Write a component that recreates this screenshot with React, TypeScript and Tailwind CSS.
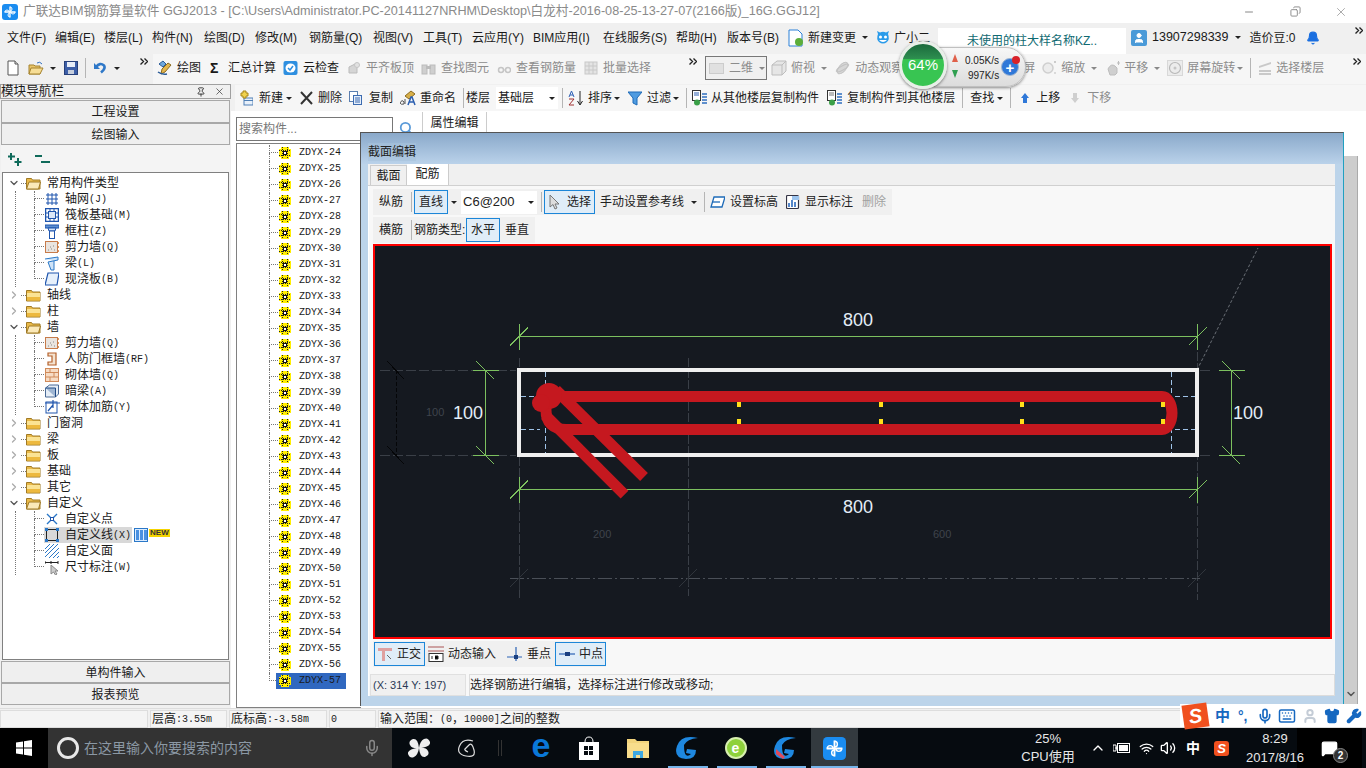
import React from 'react';
import { Bell, ChevronDown, ChevronRight, ChevronUp, Copy, Keyboard, MessageSquare, Mic, Minus, Pin, Search, Shirt, User, Volume2, Wifi, Wrench, X } from 'lucide-react';

const Caret = ({ cls = '' }: { cls?: string }) => (
  <span className={'shrink-0 w-0 h-0 border-l-[3px] border-r-[3px] border-t-[3px] border-l-transparent border-r-transparent border-t-[#222] ' + cls} />
);
const Sep = ({ cls = '' }: { cls?: string }) => <span className={'shrink-0 w-px h-[20px] bg-[#b5b5b5] ' + cls} />;
const More = ({ cls = '' }: { cls?: string }) => (
  <svg width="8" height="7" viewBox="0 0 8 7" className={'shrink-0 self-start mt-[4px] ' + cls}>
    <path d="M0.500 0.500l3 3-3 3M4.500 0.500l3 3-3 3" fill="none" stroke="#222" strokeWidth="1.400" />
  </svg>
);

const Tool = ({ cls = '', icon, text, grey }: { cls?: string; icon?: React.ReactNode; text: string; grey?: boolean }) => (
  <div className={'flex items-center shrink-0 whitespace-nowrap ' + cls + (grey ? ' text-[#8c8c8c]' : '')}>
    {icon}
    <span>{text}</span>
  </div>
);

const Svg = ({ w = 16, h = 16, children }: { w?: number; h?: number; children: React.ReactNode }) => (
  <svg width={w} height={h} viewBox={`0 0 ${w} ${h}`} className="shrink-0">{children}</svg>
);

/* toolbar icons */
const DocIcon = () => <Svg w={12}><path d="M1 1h7l3 3v11H1z" fill="#fff" stroke="#555" /><path d="M8 1v3h3" fill="#ddd" stroke="#555" /></Svg>;
const OpenIcon = () => <Svg><path d="M1 5h5l1 1h5v8H1z" fill="#e8c46a" stroke="#a5832e" /><path d="M3 8h12l-3 6H1z" fill="#f6dd95" stroke="#a5832e" /><path d="M9 3q3-2 5 1" fill="none" stroke="#2f6fc0" /></Svg>;
const SaveIcon = () => <Svg w={14}><rect x="0.500" y="1.500" width="13" height="13" fill="#3d5fa8" stroke="#27407a" /><rect x="3" y="2" width="8" height="5" fill="#e8eef8" /><rect x="4" y="10" width="6" height="4" fill="#c7cfdd" /></Svg>;
const UndoIcon = () => <Svg w={12}><path d="M2 7q4-5 8-1.500q2 3-3 7" fill="none" stroke="#2f78c8" strokeWidth="2.600" /><path d="M0 3v6h6z" fill="#2f78c8" /></Svg>;
const DrawIcon = () => <Svg><path d="M2 4l4-3 3 3-3 3z" fill="#6fa8dc" stroke="#2a5a96" /><path d="M5 9l6-6 3 2-6 7-4 2z" fill="#e4b64e" stroke="#8a6a20" /><path d="M1 12q4 3 9 2" fill="none" stroke="#2a5a96" strokeWidth="1.500" /></Svg>;
const CloudIcon = () => <Svg w={15}><rect x="0.500" y="1" width="14" height="14" rx="2" fill="#2e8fe0" /><ellipse cx="7.500" cy="8" rx="5" ry="4.500" fill="#fff" /><path d="M5 8l2 2 3-4" fill="none" stroke="#2e8fe0" strokeWidth="1.500" /></Svg>;
const GreyBox = ({ w = 14 }: { w?: number }) => <Svg w={w}><path d={`M2 7l${w - 6}-4v10H2z`} fill="#d5d5d5" stroke="#bbb" /><circle cx={w - 4} cy="5" r="2.500" fill="#e2e2e2" stroke="#c5c5c5" /></Svg>;
const GreyBino = () => <Svg w={15}><rect x="1" y="5" width="5" height="9" fill="#cfcfcf" stroke="#bbb" /><rect x="9" y="5" width="5" height="9" fill="#cfcfcf" stroke="#bbb" /><rect x="5" y="6" width="5" height="3" fill="#bbb" /></Svg>;
const GreyGlass = () => <Svg w={14}><circle cx="4" cy="10" r="2.500" fill="none" stroke="#c5c5c5" strokeWidth="1.500" /><circle cx="11" cy="10" r="2.500" fill="none" stroke="#c5c5c5" strokeWidth="1.500" /><path d="M6 10h3" stroke="#c5c5c5" /></Svg>;
const GreyBatch = () => <Svg w={14}><rect x="1" y="2" width="12" height="12" fill="#e4e4e4" stroke="#c8c8c8" /><path d="M1 6h12M1 10h12M5 2v12M9 2v12" stroke="#c8c8c8" /></Svg>;
const GreyCube = () => <Svg><path d="M1 5l5-4h9v10l-4 4H1z" fill="#e6e6e6" stroke="#bdbdbd" /><path d="M1 5h10v10M11 5l4-4" fill="none" stroke="#bdbdbd" /></Svg>;
const GreyOrbit = () => <Svg w={15}><ellipse cx="7.500" cy="8" rx="3.500" ry="7" transform="rotate(40 7.500 8)" fill="#d6d6d6" stroke="#c2c2c2" /><ellipse cx="7.500" cy="8" rx="7" ry="2" transform="rotate(-30 7.500 8)" fill="none" stroke="#c2c2c2" /></Svg>;
const GreyZoom = () => <Svg w={15}><circle cx="6" cy="8" r="5" fill="#ececec" stroke="#cfcfcf" strokeWidth="1.500" /><path d="M12 2h2M13 1v2M12 13h2" stroke="#bdbdbd" /></Svg>;
const GreyPan = () => <Svg w={14}><path d="M2 9q3-6 7-3l2 2v5l-2 2H4z" fill="#cfcfcf" stroke="#bdbdbd" /><path d="M11 3h3M12.500 1v4" stroke="#bdbdbd" /></Svg>;
const GreyRotate = () => <Svg><rect x="0.500" y="0.500" width="15" height="15" fill="#ececec" stroke="#d8d8d8" /><circle cx="8" cy="8" r="5.500" fill="none" stroke="#b8b8b8" strokeWidth="1.200" /><circle cx="8" cy="8" r="1.500" fill="#c5c5c5" /></Svg>;
const GreyFloors = () => <Svg w={14}><path d="M1 6l12-4v2L1 8zM1 10h12v2H1zM1 13h12v2H1z" fill="#c9c9c9" /></Svg>;
const NewIcon = () => <Svg w={13}><rect x="4" y="8" width="9" height="7" fill="#e8f0fa" stroke="#4f7fb5" /><path d="M4 10.500h9" stroke="#4f7fb5" /><path d="M3 1h3v2h2v3H6v2H3V6H1V3h2z" fill="#f0d24e" stroke="#a8861a" /></Svg>;
const CrossIcon = () => <Svg w={13}><path d="M1 2l11 12M12 2L1 14" stroke="#333" strokeWidth="2" /></Svg>;
const CopyIcon = () => <Svg w={13}><rect x="0.500" y="1.500" width="8" height="10" fill="#fff" stroke="#5a7fb0" /><rect x="4.500" y="5.500" width="8" height="9" fill="#e5eefa" stroke="#3c6bb0" /><path d="M6 8h5M6 10h5M6 12h5" stroke="#3c6bb0" /></Svg>;
const RenameIcon = () => <Svg><path d="M5 6l6-5 4 3-6 5z" fill="#d8b04a" stroke="#8a6a20" /><path d="M0 13q2-4 4-1v2q-3 1-4-1zM5 9v5" fill="none" stroke="#555" /><path d="M8 15l3-8h1l3 8M9.500 12h4" fill="none" stroke="#2c5fb0" strokeWidth="1.500" /></Svg>;
const SortIcon = () => <Svg><path d="M1 7l2.500-6L6 7M2 5h3" fill="none" stroke="#2b5fb5" /><path d="M1 9h5l-5 6h5" fill="none" stroke="#a03030" /><path d="M12 1v13M9.500 11l2.500 4 2.500-4" fill="none" stroke="#222" /></Svg>;
const FunnelIcon = () => <Svg w={14}><path d="M0 2h14L9 8v7l-4-2V8z" fill="#4f9be0" stroke="#1e6bb8" /></Svg>;
const TransferIcon = ({ down }: { down?: boolean }) => <Svg><rect x="0.500" y="0.500" width="8" height="10" fill="#fff" stroke="#333" /><path d="M2 3h5M2 5h5" stroke={down ? '#2c5fb0' : '#777'} /><path d="M10 4h5M10 7h5M10 10h5M10 13h5" stroke="#2f6fc0" strokeWidth="1.500" /><circle cx="5" cy="12.500" r="3" fill="#3aa048" /></Svg>;
const UpIcon = ({ grey }: { grey?: boolean }) => <Svg w={10}><path d="M5 3l4 5H7v5H3V8H1z" fill={grey ? '#cfcfcf' : '#2f78d8'} /></Svg>;
const DownIcon = () => <Svg w={10}><path d="M5 13l4-5H7V3H3v5H1z" fill="#cfcfcf" /></Svg>;
const FaceIcon = () => (
  <Svg w={16} h={16}>
    <path d="M3 4L2 1l3 1.500q3-1.500 6 0L14 1l-1 3q2 5-1 8-4 3-8 0-3-3-1-8z" fill="#2a9bea" />
    <circle cx="5.500" cy="7" r="1.500" fill="#fff" /><circle cx="10.500" cy="7" r="1.500" fill="#fff" />
    <path d="M4 10q4 4 8 0z" fill="#fff" />
  </Svg>
);

/* tree icons */
const Folder = ({ open }: { open?: boolean }) => (
  <Svg w={15} h={14}>
    <path d="M0.500 2.500h5l1 1.500h7.500v9H0.500z" fill="#e9b949" stroke="#a07a25" />
    {open ? <path d="M3 6h11.500l-2 7H0.500z" fill="#fbe9b8" stroke="#a07a25" /> : <><rect x="1" y="5" width="13" height="4" fill="#fbe394" /><rect x="1" y="9" width="13" height="3.500" fill="#edb93f" /></>}
  </Svg>
);
const CIcon = ({ k }: { k: string }) => {
  const b = '#1f55ad';
  if (k === 'grid') return <Svg w={14} h={14}><path d="M1 3h12M1 7h12M1 11h12M3 1v12M7 1v12M11 1v12" stroke={b} /></Svg>;
  if (k === 'raft') return <Svg w={14} h={14}><rect x="0.500" y="0.500" width="13" height="13" fill="none" stroke={b} strokeWidth="1.500" /><rect x="3.500" y="3.500" width="7" height="7" fill="#dce8f8" stroke={b} /><path d="M0 5h3M0 9h3M11 5h3M11 9h3M5 0v3M9 0v3M5 11v3M9 11v3" stroke={b} /></Svg>;
  if (k === 'col') return <Svg w={14} h={15}><path d="M0 1h14v3H0z" fill="#5d8fd0" stroke={b} /><path d="M3 4h8l-1 3H4z" fill="#cfe0f5" stroke={b} /><rect x="4.500" y="7" width="5" height="7.500" fill="#fff" stroke={b} /></Svg>;
  if (k === 'shear') return <Svg w={14} h={14}><rect x="0.500" y="1.500" width="12" height="11" fill="#e9e4df" stroke="#c77b4a" /><path d="M3 10h1M6 9h1M9 10h1M5 7h1M8 6h1" stroke="#888" /><path d="M13 3h1M13 7h1M13 11h1" stroke="#d0702a" strokeWidth="1.500" /></Svg>;
  if (k === 'beam') return <Svg w={14} h={15}><path d="M0 3l13-2v3L3 6l3 8h3V5" fill="#cfe3f7" stroke="#2a78c8" /></Svg>;
  if (k === 'slab') return <Svg w={14} h={14}><path d="M3 1h11l-2 12H0z" fill="#e6f0fb" stroke={b} strokeWidth="1.200" /></Svg>;
  if (k === 'door') return <Svg w={14} h={14}><path d="M3 1h8v12H3v-3h4V4H3z" fill="#f4e3d0" stroke="#b5602a" strokeWidth="1.200" /></Svg>;
  if (k === 'brick') return <Svg w={14} h={14}><rect x="0.500" y="0.500" width="13" height="13" fill="#f7dcc4" stroke="#d08a5a" /><path d="M0 4.500h14M0 9h14M5 0v4.500M9 4.500V9M5 9v5" stroke="#d08a5a" /></Svg>;
  if (k === 'hidden') return <Svg w={14} h={14}><path d="M0.500 4l4-3h9v9l-3 3H0.500z" fill="#e5edf6" stroke="#4a6a96" /><path d="M0.500 4h10v9" fill="#9fb6d3" stroke="#1f4a86" /></Svg>;
  if (k === 'rebar') return <Svg w={15} h={14}><rect x="1" y="2" width="11" height="11" fill="#fff" stroke={b} /><path d="M0 3h15M8 0v8M3 11l5-6" stroke={b} strokeWidth="1.200" /></Svg>;
  if (k === 'point') return <Svg w={14} h={14}><path d="M2 2l10 10M12 2L2 12" stroke="#2a78c8" strokeWidth="1.400" /><rect x="5.500" y="5.500" width="3" height="3" fill="#fff" stroke={b} /></Svg>;
  if (k === 'line') return <Svg w={14} h={14}><rect x="1.500" y="1.500" width="11" height="11" fill="none" stroke="#222" /><path d="M0 0h3v3H0zM11 0h3v3h-3zM0 11h3v3H0zM11 11h3v3h-3z" fill="#2a78c8" /></Svg>;
  if (k === 'face') return <Svg w={14} h={14}><path d="M0 5L5 0M0 9l9-9M0 13L13 0M4 14L14 4M8 14l6-6M12 14l2-2" stroke="#2a78c8" /></Svg>;
  return <Svg w={15} h={15}><path d="M0 1v3M0 2.500h13M13 1v3M6 1v3" stroke="#222" /><path d="M6 5v9l2.500-2 2 3 1.500-1-2-3h3z" fill="#ccc" stroke="#888" /></Svg>;
};
const Gear = () => (
  <Svg w={12} h={12}>
    <rect x="2" y="0" width="8" height="12" fill="#ffee00" />
    <rect x="0" y="2" width="12" height="8" fill="#ffee00" />
    <path d="M3.500 0v12M8.500 0v12M0 3.500h12M0 8.500h12" stroke="#222" strokeDasharray="1 1" />
    <rect x="4.500" y="4.500" width="3" height="3" fill="#fff" stroke="#111" />
  </Svg>
);

type Item = { k: string; a: string; b?: string };
const Root = ({ text, open, children }: { text: string; open?: boolean; children?: React.ReactNode }) => (
  <>
    <div className="flex items-center h-[16px]">
      {open ? <ChevronDown size={12} strokeWidth={2.500} className="ml-[5px] text-[#555] shrink-0" /> : <ChevronRight size={12} strokeWidth={2.500} className="ml-[5px] text-[#aaa] shrink-0" />}
      <span className="w-[5px] ml-[1px] border-t border-dotted border-[#777]" />
      <Folder open={open} />
      <span className="ml-[6px] text-[12px]">{text}</span>
    </div>
    {children}
  </>
);
const Kids = ({ items }: { items: Item[] }) => (
  <div className="ml-[12px] border-l border-dotted border-[#777]">
    {items.map((it, i) => (
      <div key={i} className="flex items-center h-[16px]">
        <div className="ml-[18px] w-[10px] h-[16px] shrink-0">
          <div className="h-[8px] border-l border-b border-dotted border-[#777]" />
          <div className={'h-[8px] ' + (i < items.length - 1 ? 'border-l border-dotted border-[#777]' : '')} />
        </div>
        <span className="relative z-10 w-[16px] flex justify-center shrink-0"><CIcon k={it.k} /></span>
        <span className={'flex items-center h-[16px] text-[12px] whitespace-nowrap ' + (it.k === 'line' ? 'bg-[#d8d8d8] pr-[1px] -ml-[16px] pl-[21px]' : 'ml-[5px]')}>
          {it.a}
          {it.b && <span className="font-['Liberation_Mono',monospace] text-[10px]">{it.b}</span>}
        </span>
        {it.k === 'line' && (
          <>
            <span className="ml-[2px] w-[14px] h-[14px] bg-[#dcecff] border border-[#2a78c8] flex gap-px justify-center items-center">
              <span className="w-[3px] h-[10px] bg-[#4a90e0]" /><span className="w-[3px] h-[10px] bg-[#4a90e0]" /><span className="w-[3px] h-[10px] bg-[#4a90e0]" />
            </span>
            <span className="ml-[1px] -mt-[5px] px-[1px] bg-[#f5d400] text-[8px] leading-[8px] font-bold text-[#333] font-['Liberation_Sans',sans-serif]">NEW</span>
          </>
        )}
      </div>
    ))}
  </div>
);

const common: Item[] = [
  { k: 'grid', a: '轴网', b: '(J)' }, { k: 'raft', a: '筏板基础', b: '(M)' }, { k: 'col', a: '框柱', b: '(Z)' },
  { k: 'shear', a: '剪力墙', b: '(Q)' }, { k: 'beam', a: '梁', b: '(L)' }, { k: 'slab', a: '现浇板', b: '(B)' },
];
const wall: Item[] = [
  { k: 'shear', a: '剪力墙', b: '(Q)' }, { k: 'door', a: '人防门框墙', b: '(RF)' }, { k: 'brick', a: '砌体墙', b: '(Q)' },
  { k: 'hidden', a: '暗梁', b: '(A)' }, { k: 'rebar', a: '砌体加筋', b: '(Y)' },
];
const custom: Item[] = [
  { k: 'point', a: '自定义点' }, { k: 'line', a: '自定义线', b: '(X)' }, { k: 'face', a: '自定义面' }, { k: 'dim', a: '尺寸标注', b: '(W)' },
];

const menus = [
  ['文件(F)', 'w-[48px]'], ['编辑(E)', 'w-[49px]'], ['楼层(L)', 'w-[48px]'], ['构件(N)', 'w-[52px]'], ['绘图(D)', 'w-[51px]'],
  ['修改(M)', 'w-[54px]'], ['钢筋量(Q)', 'w-[64px]'], ['视图(V)', 'w-[50px]'], ['工具(T)', 'w-[49px]'], ['云应用(Y)', 'w-[61px]'],
  ['BIM应用(I)', 'w-[70px]'], ['在线服务(S)', 'w-[73px]'], ['帮助(H)', 'w-[51px]'], ['版本号(B)', 'w-[61px]'],
];
const zdyx = Array.from({ length: 34 }, (_, i) => i + 24);

const AppLogo = ({ s = 16 }: { s?: number }) => (
  <svg width={s} height={s} viewBox="0 0 16 16" className="shrink-0">
    <rect width="16" height="16" rx="3" fill="#1a8cf0" />
    <path d="M8 2.500v11M2.500 8h11" stroke="#fff" strokeWidth="1.300" fill="none" />
    <path d="M8 3q2 0 2 2t-2 2M13 8q0 2-2 2t-2-2M8 13q-2 0-2-2t2-2M3 8q0-2 2-2t2 2" stroke="#fff" fill="none" />
  </svg>
);

const Section = () => {
  const green = '#7cc05f';
  const tickV = (x: number, y: number) => `M${x} ${y - 13}V${y + 13}M${x - 9} ${y + 9}L${x + 9} ${y - 9}`;
  const tickH = (x: number, y: number) => `M${x - 13} ${y}H${x + 13}M${x - 9} ${y - 9}L${x + 9} ${y + 9}`;
  return (
    <svg viewBox="373 244 959 395" width="959" height="395" className="block">
      <rect x="373" y="244" width="959" height="395" fill="#151920" />
      {/* dark reference lines */}
      <g stroke="#3a3f47" fill="none" shapeRendering="crispEdges">
        <path d="M380 370.500H516M380 455.500H516M1200 370.500H1211M1200 455.500H1211" strokeDasharray="10 3" />
        <path d="M519 358V600M688 358V596M1197.500 352V600" strokeDasharray="9 2" />
        <path d="M510 578H1200" stroke="#4a4f57" strokeDasharray="14 3 2 3" />
        <path d="M688 570V586M519 570V590M510 587L528 569M679 587L697 569M1188 587L1206 569" stroke="#30353c" />
      </g>
      <g stroke="#050608" fill="none" shapeRendering="crispEdges">
        <path d="M396.500 370V456" strokeDasharray="4 2" />
        <path d="M387 361L404 379M387 446L404 464" />
      </g>
      <path d="M1197 370L1258 248" stroke="#6a6f76" strokeDasharray="3 2" fill="none" />
      {/* green dimensions */}
      <g stroke={green} fill="none" shapeRendering="crispEdges">
        <path d="M519 336.500H1197M519 489.500H1197M485.500 370.500V455.500M1231.500 370.500V455.500" />
        <path d={tickV(519, 336.5)} /><path d={tickV(1197.5, 336.5)} />
        <path d={tickV(519, 489.5)} /><path d={tickV(1197.5, 489.5)} />
        <path d={tickH(485.5, 370.5)} /><path d={tickH(485.5, 455.5)} />
        <path d={tickH(1231.5, 370.5)} /><path d={tickH(1231.5, 455.5)} />
      </g>
      <rect x="519" y="370" width="678" height="85" fill="none" stroke="#efefef" strokeWidth="4" />
      {/* blue construction lines */}
      <g stroke="#9fc3e8" fill="none" strokeDasharray="5 3">
        <path d="M545.500 372V453M521 396.500H540M521 429.500H540M1171.500 372V453M1175 396.500H1195M1175 429.500H1195" />
      </g>
      {/* stirrup */}
      <g stroke="#c5181f" fill="none" strokeWidth="11">
        <path d="M552 396.500H1162A10 16.500 0 0 1 1162 429.500H566Q546 429 546 410V396" />
        <path d="M556 390L644 477" />
        <path d="M545 415L624.500 494.700" />
      </g>
      <circle cx="549" cy="396" r="13" fill="#c5181f" />
      <circle cx="541" cy="403" r="9" fill="#c5181f" />
      <g fill="#ffdf1a">
        {[739, 881, 1022, 1163].map(x => (
          <React.Fragment key={x}>
            <rect x={x - 2} y="402" width="4" height="5" />
            <rect x={x - 2} y="419" width="4" height="5" />
          </React.Fragment>
        ))}
      </g>
      <g fontFamily="Liberation Sans" fontSize="18" fill="#e3edf7">
        <text x="843" y="326">800</text>
        <text x="843" y="513">800</text>
        <text x="453" y="419">100</text>
        <text x="1233" y="419">100</text>
      </g>
      <g fontFamily="Liberation Sans" fontSize="11" fill="#3f444c">
        <text x="426" y="416">100</text>
        <text x="593" y="538">200</text>
        <text x="933" y="538">600</text>
      </g>
    </svg>
  );
};

const Dialog = () => (
  <div className="absolute left-[360px] top-[132px] w-[984px] h-[574px] flex flex-col border-l border-t border-[#555] bg-[#bcd4ea] border-r border-r-[#20a0c0]">
    <div className="h-[31px] shrink-0 bg-gradient-to-b from-[#8aa9ca] to-[#bad2ea] flex items-center pl-[7px] pt-[6px] text-[12px] text-[#222]">
      <span className="bg-[#a9c3dc]/60">截面编辑</span>
    </div>
    <div className="ml-[7px] w-[967px] h-[563px] bg-[#f4f4f4] flex flex-col mb-[10px] overflow-hidden">
      <div className="h-[22px] shrink-0 flex items-end pl-[2px] text-[12px] border-b border-[#d0d0d0] bg-[#f0f0f0]">
        <div className="w-[37px] h-[20px] flex items-center justify-center border border-b-0 border-[#ccc] bg-[#f0f0f0]">截面</div>
        <div className="w-[42px] h-[22px] flex items-center justify-center bg-white border-r border-[#ccc]">配筋</div>
      </div>
      <div className="flex-1 flex flex-col border-l border-[#fff] bg-[#f8f8f8] text-[12px] text-[#222]">
        <div className="ml-[4px] mt-[3px] w-[519px] h-[26px] shrink-0 flex items-center bg-[#f0f0f0]">
          <span className="ml-[6px]">纵筋</span>
          <Sep cls="ml-[8px]" />
          <div className="ml-[2px] w-[34px] h-[24px] flex items-center justify-center border border-[#1c86d8] bg-[#e0edf8]">直线</div>
          <Caret cls="ml-[3px]" />
          <div className="ml-[4px] w-[76px] h-[23px] bg-white flex items-center pl-[2px] justify-between pr-[3px]">
            <span className="font-['Liberation_Sans',sans-serif] text-[13px]">C6@200</span>
            <Caret />
          </div>
          <Sep cls="ml-[4px]" />
          <div className="ml-[2px] w-[51px] h-[24px] flex items-center pl-[4px] gap-[6px] border border-[#1c86d8] bg-[#e0edf8]">
            <Svg w={12}><path d="M1 1v12l3-2.500 2 4.500 2-1-2-4h4z" fill="#ddd" stroke="#777" /></Svg>
            <span>选择</span>
          </div>
          <span className="ml-[5px] whitespace-nowrap">手动设置参考线</span>
          <Caret cls="ml-[7px]" />
          <Sep cls="ml-[7px]" />
          <Tool cls="ml-[5px] gap-[5px]" icon={<Svg w={15}><path d="M4 3h11l-3 10H1z" fill="#fff" stroke="#1e6bb8" strokeWidth="1.300" /><path d="M3 8h7" stroke="#1e6bb8" strokeWidth="1.300" /></Svg>} text="设置标高" />
          <Tool cls="ml-[8px] gap-[5px]" icon={<Svg w={14}><rect x="0.500" y="1.500" width="12" height="13" rx="1" fill="#fff" stroke="#334" strokeWidth="1.200" /><path d="M3 13V9M6 13V6M9 13V8" stroke="#1e5fb8" strokeWidth="1.500" /><rect x="6" y="2" width="7" height="4" fill="#9cc4ee" /></Svg>} text="显示标注" />
          <span className="ml-[9px] text-[#a0a0a0]">删除</span>
        </div>
        <div className="ml-[4px] mt-[2px] w-[162px] h-[26px] shrink-0 flex items-center bg-[#f0f0f0]">
          <span className="ml-[6px]">横筋</span>
          <Sep cls="ml-[8px]" />
          <span className="ml-[2px] w-[52px] whitespace-nowrap">钢筋类型:</span>
          <div className="w-[34px] h-[24px] flex items-center justify-center border border-[#1c86d8] bg-[#e0edf8]">水平</div>
          <span className="ml-[5px]">垂直</span>
        </div>
        <div className="ml-[4px] mt-[1px] w-[959px] h-[395px] shrink-0 relative">
          <Section />
          <div className="absolute inset-0 border-2 border-[#ff0000] pointer-events-none" />
        </div>
        <div className="ml-[4px] mt-[2px] h-[26px] w-[233px] shrink-0 flex items-center bg-[#f0f0f0]">
          <div className="ml-[1px] w-[51px] h-[24px] flex items-center pl-[3px] gap-[4px] border border-[#1c86d8] bg-[#e0edf8]">
            <Svg w={15}><path d="M0 2h14v3H0z" fill="#dfa0a0" /><path d="M4 5h3v10H4z" fill="#dfa0a0" /><path d="M9 9l4 4" stroke="#666" /></Svg>
            <span>正交</span>
          </div>
          <Tool cls="ml-[3px] gap-[4px]" icon={<Svg><path d="M0 1h16M0 5h16" stroke="#a55" /><rect x="1" y="7.500" width="14" height="8" fill="#fff" stroke="#333" /><path d="M4 10v3M7 10h3v3H7" stroke="#222" /></Svg>} text="动态输入" />
          <Tool cls="ml-[11px] gap-[5px]" icon={<Svg w={15}><path d="M0 11h15M9 1v14" stroke="#2a62b5" strokeWidth="1.200" /><rect x="7" y="9" width="4" height="4" fill="#1b3f80" /></Svg>} text="垂点" />
          <div className="ml-[4px] w-[51px] h-[24px] flex items-center pl-[3px] gap-[4px] border border-[#1c86d8] bg-[#e0edf8] shrink-0">
            <Svg><path d="M0 8h16" stroke="#2a62b5" strokeWidth="1.200" /><rect x="6" y="6" width="5" height="4" fill="#1b3f80" /></Svg>
            <span>中点</span>
          </div>
        </div>
        <div className="mt-[7px] ml-[1px] h-[22px] shrink-0 flex gap-[3px]">
          <div className="w-[96px] flex items-center pl-[2px] bg-[#f0f0f0] border border-[#e0e0e0] text-[11px] text-[#2a3a55] font-['Liberation_Sans',sans-serif]">(X: 314 Y: 197)</div>
          <div className="flex-1 flex items-center bg-[#f6f6f6] border border-[#dcdcdc]">选择钢筋进行编辑，选择标注进行修改或移动;</div>
        </div>
      </div>
    </div>
  </div>
);

const Gauge = () => (
  <>
    <div className="absolute left-[920px] top-[47px] w-[106px] h-[40px] rounded-full bg-gradient-to-b from-[#f7f7f7] to-[#dcdcdc] border border-[#c0c0c0] shadow-[0_1px_3px_rgba(0,0,0,0.45)] font-['Liberation_Sans',sans-serif] text-[10px] text-[#222]">
      <span className="absolute left-[44px] top-[5px] whitespace-nowrap">0.05K/s</span>
      <span className="absolute left-[47px] top-[20px] whitespace-nowrap">997K/s</span>
      <span className="absolute left-[31px] top-[6px] w-0 h-0 border-l-[3px] border-r-[3px] border-b-[8px] border-l-transparent border-r-transparent border-b-[#e0604a]" />
      <span className="absolute left-[31px] top-[22px] w-0 h-0 border-l-[3px] border-r-[3px] border-t-[8px] border-l-transparent border-r-transparent border-t-[#2f9f50]" />
      <span className="absolute left-[80px] top-[10px] w-[18px] h-[18px] rounded-full bg-[#2f78d8] border border-[#9fb5d0] flex items-center justify-center text-white text-[15px] leading-none font-bold">+</span>
      <span className="absolute left-[91px] top-[8px] w-[8px] h-[8px] rounded-full bg-[#d8222a]" />
    </div>
    <div className="absolute left-[899px] top-[41px] w-[48px] h-[48px] rounded-full border-[3px] border-[#e8efe8] shadow-[0_1px_3px_rgba(0,0,0,0.5)] bg-[linear-gradient(180deg,#1a6a3c_0%,#2e8f50_36%,#38c552_37%,#38c552_100%)] overflow-hidden flex items-center justify-center text-white text-[15px] font-['Liberation_Sans',sans-serif]">
      64%
    </div>
  </>
);

const Sogou = () => (
  <div className="absolute left-[1180px] top-[704px] h-[23px] w-[186px] bg-white flex items-center text-[#1668c0]">
    <span className="w-[25px] h-[24px] ml-[3px] rotate-[-8deg] bg-[#f0501e] flex items-center justify-center text-white font-bold italic text-[20px] leading-none font-['Liberation_Sans',sans-serif]">S</span>
    <span className="ml-[7px] text-[15px] font-bold leading-none">中</span>
    <span className="ml-[8px] text-[14px] font-bold leading-none">°,</span>
    <Mic size={16} strokeWidth={2.500} className="ml-[9px]" />
    <Keyboard size={18} strokeWidth={2} className="ml-[5px]" />
    <User size={16} strokeWidth={3} className="ml-[6px] text-[#c4ccd6]" />
    <Shirt size={16} fill="#1668c0" className="ml-[6px]" />
    <Wrench size={16} fill="#1668c0" className="ml-[6px]" />
  </div>
);

const AppCell = ({ children, bar }: { children: React.ReactNode; bar?: boolean }) => (
  <div className="relative w-[49px] h-full shrink-0 flex items-center justify-center">
    {children}
    {bar && <span className="absolute bottom-0 left-[6px] w-[40px] h-[2px] bg-[#76b4ea]" />}
  </div>
);

const Taskbar = () => (
  <div className="h-[40px] shrink-0 flex items-center bg-[#060b10] text-white font-['Liberation_Sans','Noto_Sans_CJK_SC',sans-serif]">
    <div className="w-[48px] h-full shrink-0 bg-black flex items-center justify-center">
      <svg width="16" height="16" viewBox="0 0 16 16"><path d="M0 2.500l7-1v6H0zM8 1.300l8-1.300v7.500H8zM0 8.500h7v6l-7-1zM8 8.500h8V16l-8-1.300z" fill="#fff" /></svg>
    </div>
    <div className="w-[344px] h-full shrink-0 bg-[#333] flex items-center">
      <span className="ml-[9px] w-[22px] h-[22px] rounded-full border-[3px] border-[#e8e8e8]" />
      <span className="ml-[5px] text-[14px] text-[#8b98a4]">在这里输入你要搜索的内容</span>
      <Mic size={18} className="ml-auto mr-[11px] text-[#888]" />
    </div>
    <div className="w-[52px] shrink-0 flex justify-center ml-[1px]">
      <svg width="22" height="22" viewBox="0 0 22 22"><path d="M11 11Q4 12 2 8t3-6q5-1 6 9zM11 11q1-7 5-9t6 3q1 5-11 6zM11 11q7-1 9 3t-3 6q-5 1-6-9zM11 11q-1 7-5 9t-6-3q-1-5 11-6z" fill="#eee" /></svg>
    </div>
    <div className="w-[44px] shrink-0 flex justify-center">
      <svg width="20" height="20" viewBox="0 0 20 20" fill="none" stroke="#ddd" strokeWidth="1.200"><path d="M16 3Q6 0 2.500 8T9 18t8-6-5-5-4 4 3 3" /></svg>
    </div>
    <span className="ml-[9px] w-[4px] h-[16px] shrink-0 border-x border-[#333]" />
    <div className="ml-[15px] w-[48px] shrink-0 flex justify-center">
      <span className="text-[#0a78d8] text-[34px] leading-none font-bold font-['Liberation_Sans',sans-serif] -mt-[6px]">e</span>
    </div>
    <div className="w-[48px] shrink-0 flex justify-center">
      <svg width="20" height="24" viewBox="0 0 20 24"><path d="M6 6q0-5 4-5t4 5" fill="none" stroke="#fff" /><path d="M0 6h20v18H0z" fill="#fff" /><path d="M5 10h4v4H5zM10 10h4v4h-4zM5 15h4v4H5zM10 15h4v4h-4z" fill="#060b10" /></svg>
    </div>
    <AppCell>
      <svg width="22" height="20" viewBox="0 0 22 20"><path d="M0 1h8l2 2h12v17H0z" fill="#f2d47c" /><rect x="0" y="5" width="22" height="15" fill="#f8dd8c" /><path d="M6 20v-7h10v7h-3v-3H9v3z" fill="#3fa8e0" /></svg>
    </AppCell>
    <AppCell bar>
      <svg width="24" height="24" viewBox="0 0 24 24"><path d="M23 2Q6-2 2 10t9 13q10 0 10-9l-9-1-1 4 5 1q-3 3-5 1T9 9q3-6 14-7z" fill="#1e88e0" /></svg>
    </AppCell>
    <AppCell bar>
      <span className="w-[22px] h-[22px] rounded-full bg-[#8ed13c] border-2 border-[#d8f0b0] flex items-center justify-center text-white font-bold text-[14px] leading-none">e</span>
    </AppCell>
    <AppCell bar>
      <svg width="24" height="24" viewBox="0 0 24 24"><path d="M23 2Q6-2 2 10t9 13q10 0 10-9l-9-1-1 4 5 1q-3 3-5 1T9 9q3-6 14-7z" fill="#1e88e0" /><path d="M3 13l9 8-2 2-7-5z" fill="#e04a5a" /></svg>
    </AppCell>
    <div className="relative ml-[2px] w-[47px] h-full shrink-0 bg-[#333a3f] flex items-center justify-center">
      <AppLogo s={23} />
      <span className="absolute bottom-0 inset-x-0 h-[2px] bg-[#76b4ea]" />
    </div>
    <div className="ml-[150px] w-[80px] shrink-0 text-center text-[13px] leading-[18px] text-[#e8e8e8]">
      <div>25%</div>
      <div>CPU使用</div>
    </div>
    <ChevronUp size={16} className="ml-[2px] shrink-0" />
    <svg width="18" height="12" viewBox="0 0 18 12" className="ml-[7px] shrink-0"><path d="M0 3h3v6H0zM3 5h1v2H3z" fill="none" stroke="#fff" /><rect x="4.500" y="1.500" width="12" height="9" fill="none" stroke="#fff" /><rect x="6" y="3" width="9" height="6" fill="#fff" /></svg>
    <Wifi size={15} className="ml-[8px] shrink-0" />
    <Volume2 size={16} className="ml-[6px] shrink-0" />
    <span className="ml-[10px] text-[14px] font-bold shrink-0">中</span>
    <span className="ml-[14px] w-[15px] h-[15px] shrink-0 rounded-[3px] bg-[#f0501e] flex items-center justify-center font-bold italic text-[13px] leading-none font-['Liberation_Sans',sans-serif]">S</span>
    <div className="relative z-10 ml-[8px] w-[76px] shrink-0 text-center text-[13px] leading-[19px] text-[#e8e8e8]">
      <div>8:29</div>
      <div>2017/8/16</div>
    </div>
    <div className="-ml-[16px] w-[65px] h-full shrink-0 bg-black flex items-center justify-center relative">
      <MessageSquare size={17} fill="#fff" />
      <span className="absolute left-[36px] top-[20px] w-[15px] h-[15px] rounded-full bg-[#333] border border-[#888] text-[10px] leading-[13px] text-center font-bold">2</span>
    </div>
  </div>
);

export default function App() {
  return (
    <div className="relative w-[1366px] h-[768px] overflow-hidden flex flex-col bg-[#f0f0f0] text-[12px] text-[#1a1a1a] font-['Liberation_Sans','Noto_Sans_CJK_SC',sans-serif]">
      {/* title bar */}
      <div className="h-[23px] shrink-0 bg-white flex items-center text-[#8a8a8a] text-[12.670px]">
        <span className="ml-[2px]"><AppLogo /></span>
        <span className="ml-[5px] whitespace-nowrap">广联达BIM钢筋算量软件 GGJ2013 - [C:\Users\Administrator.PC-20141127NRHM\Desktop\白龙村-2016-08-25-13-27-07(2166版)_16G.GGJ12]</span>
        <Minus size={12} className="ml-auto text-[#888]" />
        <Copy size={11} className="ml-[35px] text-[#888] -scale-x-100" />
        <X size={14} strokeWidth={1.200} className="ml-[33px] mr-[18px] text-[#888]" />
      </div>
      {/* menu bar */}
      <div className="h-[31px] shrink-0 flex items-center pl-[7px] pb-[2px] bg-[#f0f0f0]">
        {menus.map(([t, w]) => <span key={t} className={'shrink-0 whitespace-nowrap ' + w}>{t}</span>)}
        <Svg w={17} h={18}><path d="M1 1h9l4 4v12H1z" fill="#fff" stroke="#2a80d8" /><circle cx="11" cy="13" r="4" fill="#5cae3a" /></Svg>
        <span className="ml-[3px] whitespace-nowrap">新建变更</span>
        <Caret cls="ml-[6px]" />
        <span className="ml-[7px]"><FaceIcon /></span>
        <span className="ml-[3px] whitespace-nowrap w-[44px] shrink-0">广小二</span>
        <div className="w-[188px] h-[26px] shrink-0 bg-white self-end -mb-[2px] flex items-center pl-[29px] text-[#0f6a72] whitespace-nowrap overflow-hidden">未使用的柱大样名称KZ..</div>
        <span className="ml-[5px] shrink-0 w-[16px] h-[16px] rounded-[2px] bg-[#4a9ad8] flex items-center justify-center"><User size={12} fill="#fff" className="text-white" /></span>
        <span className="ml-[5px] text-[12.500px] whitespace-nowrap">13907298339</span>
        <Caret cls="ml-[6px]" />
        <span className="ml-[9px] whitespace-nowrap">造价豆:0</span>
        <Bell size={14} fill="#1a6fe0" className="ml-[10px] text-[#1a6fe0] shrink-0" />
        <More cls="ml-[35px]" />
      </div>
      {/* main toolbar */}
      <div className="h-[30px] shrink-0 flex items-center">
        <div className="w-[152px] h-full flex items-center pb-[2px] bg-[#f0f0f0] shrink-0">
          <span className="ml-[7px]"><DocIcon /></span>
          <span className="ml-[9px]"><OpenIcon /></span>
          <Caret cls="ml-[6px]" />
          <span className="ml-[8px]"><SaveIcon /></span>
          <Sep cls="ml-[7px]" />
          <span className="ml-[8px]"><UndoIcon /></span>
          <Caret cls="ml-[8px]" />
          <More cls="ml-[20px]" />
        </div>
        <div className="flex-1 h-full flex items-center pb-[2px] bg-[#f6f6f6] ml-[1px]">
          <Tool cls="ml-[4px] gap-[4px]" icon={<DrawIcon />} text="绘图" />
          <span className="ml-[9px] w-[10px] font-bold text-[14px] leading-none">Σ</span>
          <span className="ml-[8px] shrink-0">汇总计算</span>
          <Tool cls="ml-[7px] gap-[5px]" icon={<CloudIcon />} text="云检查" />
          <Tool grey cls="ml-[8px] gap-[5px]" icon={<GreyBox />} text="平齐板顶" />
          <Tool grey cls="ml-[7px] gap-[5px]" icon={<GreyBino />} text="查找图元" />
          <Tool grey cls="ml-[8px] gap-[5px]" icon={<GreyGlass />} text="查看钢筋量" />
          <Tool grey cls="ml-[8px] gap-[5px]" icon={<GreyBatch />} text="批量选择" />
          <More cls="ml-[38px]" />
          <div className="ml-[8px] w-[62px] h-[24px] shrink-0 border border-[#777] bg-[#f0f0f0] flex items-center text-[#8c8c8c]">
            <span className="ml-[3px] w-[15px] h-[11px] bg-[#e0e0e0] border border-[#ccc]" />
            <span className="ml-[5px]">二维</span>
            <Caret cls="ml-[6px] border-t-[#888]" />
          </div>
          <Tool grey cls="ml-[4px] gap-[4px]" icon={<GreyCube />} text="俯视" />
          <Caret cls="ml-[6px] border-t-[#888]" />
          <Tool grey cls="ml-[8px] gap-[5px]" icon={<GreyOrbit />} text="动态观察" />
          <span className="ml-[120px] text-[#8c8c8c] shrink-0">屏</span>
          <Tool grey cls="ml-[7px] gap-[4px]" icon={<GreyZoom />} text="缩放" />
          <Caret cls="ml-[6px] border-t-[#888]" />
          <Tool grey cls="ml-[9px] gap-[4px]" icon={<GreyPan />} text="平移" />
          <Caret cls="ml-[6px] border-t-[#888]" />
          <Tool grey cls="ml-[7px] gap-[4px]" icon={<GreyRotate />} text="屏幕旋转" />
          <Caret cls="ml-[2px] border-t-[#888]" />
          <Sep cls="ml-[7px]" />
          <Tool grey cls="ml-[7px] gap-[4px]" icon={<GreyFloors />} text="选择楼层" />
          <More cls="ml-[29px]" />
        </div>
      </div>
      {/* body */}
      <div className="flex-1 min-h-0 flex bg-white">
        {/* module nav */}
        <div className="w-[231px] shrink-0 flex flex-col bg-[#f0f0f0]">
          <div className="h-[15px] shrink-0 flex items-center border border-[#a0a0a0] bg-[#f0f0f0] text-[12.600px]">
            <span className="leading-none">模块导航栏</span>
            <Pin size={10} className="ml-auto text-[#222]" />
            <X size={11} strokeWidth={1.500} className="ml-[8px] mr-[5px] text-[#333]" />
          </div>
          <div className="mt-[1px] mx-px h-[23px] shrink-0 flex items-center justify-center pt-[1px] border border-[#a8a8a8] bg-[#efefef]">工程设置</div>
          <div className="mx-px h-[22px] shrink-0 flex items-center justify-center pt-[1px] border border-[#a8a8a8] bg-[#efefef]">绘图输入</div>
          <div className="mx-px h-[27px] shrink-0 flex items-center pl-[6px] gap-[10px] bg-[#f4f4f4]">
            <Svg w={17} h={16}><path d="M4 2v7M1 5.500h7M11 7v8M7.500 11h7" stroke="#0f6a5a" strokeWidth="2" /></Svg>
            <Svg w={17} h={16}><path d="M1 5h7M7 11h9" stroke="#0f6a5a" strokeWidth="2" /></Svg>
          </div>
          <div className="ml-[2px] w-[227px] h-[488px] shrink-0 bg-white border border-[#808080] pt-[2px] overflow-hidden">
            <Root text="常用构件类型" open><Kids items={common} /></Root>
            <Root text="轴线" />
            <Root text="柱" />
            <Root text="墙" open><Kids items={wall} /></Root>
            <Root text="门窗洞" />
            <Root text="梁" />
            <Root text="板" />
            <Root text="基础" />
            <Root text="其它" />
            <Root text="自定义" open><Kids items={custom} /></Root>
          </div>
          <div className="mt-[1px] mx-px h-[22px] shrink-0 flex items-center justify-center pt-[1px] border border-[#a8a8a8] bg-[#efefef]">单构件输入</div>
          <div className="mx-px h-[22px] shrink-0 flex items-center justify-center pt-[1px] border border-[#a8a8a8] bg-[#efefef]">报表预览</div>
        </div>
        {/* right side */}
        <div className="flex-1 min-w-0 flex flex-col bg-[#f0f0f0]">
          <div className="h-[26px] mt-[1px] shrink-0 flex items-center ml-[4px] bg-[#f6f6f6]">
            <Tool cls="ml-[5px] gap-[6px]" icon={<NewIcon />} text="新建" />
            <Caret cls="ml-[3px]" />
            <Tool cls="ml-[8px] gap-[5px]" icon={<CrossIcon />} text="删除" />
            <Tool cls="ml-[7px] gap-[7px]" icon={<CopyIcon />} text="复制" />
            <Tool cls="ml-[7px] gap-[4px]" icon={<RenameIcon />} text="重命名" />
            <Sep cls="ml-[7px]" />
            <span className="ml-[2px] shrink-0">楼层</span>
            <div className="ml-[6px] w-[62px] h-[22px] shrink-0 bg-white flex items-center pl-[2px] justify-between pr-[3px]">
              <span>基础层</span>
              <Caret />
            </div>
            <Sep cls="ml-[4px]" />
            <Tool cls="ml-[5px] gap-[4px]" icon={<SortIcon />} text="排序" />
            <Caret cls="ml-[2px]" />
            <Tool cls="ml-[8px] gap-[5px]" icon={<FunnelIcon />} text="过滤" />
            <Caret cls="ml-[2px]" />
            <Sep cls="ml-[7px]" />
            <Tool cls="ml-[5px] gap-[3px]" icon={<TransferIcon down />} text="从其他楼层复制构件" />
            <Tool cls="ml-[8px] gap-[4px]" icon={<TransferIcon />} text="复制构件到其他楼层" />
            <Sep cls="ml-[7px]" />
            <span className="ml-[7px] shrink-0">查找</span>
            <Caret cls="ml-[3px]" />
            <Sep cls="ml-[7px]" />
            <Tool cls="ml-[9px] gap-[6px]" icon={<UpIcon />} text="上移" />
            <Tool grey cls="ml-[10px] gap-[7px]" icon={<DownIcon />} text="下移" />
          </div>
          <div className="flex-1 min-h-0 flex bg-white">
            <div className="w-[125px] shrink-0 ml-[5px] flex flex-col">
              <div className="mt-[6px] h-[24px] w-[157px] shrink-0 border border-[#777] bg-white flex items-center pl-[2px] text-[#777] relative z-0">搜索构件...</div>
              <div className="mt-[2px] flex-1 border-l border-t border-b border-[#808080] bg-white overflow-hidden pt-[1px] relative">
                {zdyx.map((n, i) => (
                  <div key={n} className="flex items-center h-[16px] pl-[32px]">
                    <div className="w-[11px] h-[16px] shrink-0">
                      <div className="h-[8px] border-l border-b border-dotted border-[#777]" />
                      <div className={'h-[8px] ' + (i < zdyx.length - 1 ? 'border-l border-dotted border-[#777]' : '')} />
                    </div>
                    <div className={'flex items-center h-[16px] w-[70px] -ml-[4px] pl-[3px] shrink-0 ' + (n === 57 ? 'bg-[#3068c0]' : '')}>
                      <Gear />
                      <span className="ml-[8px] font-['Liberation_Mono',monospace] text-[10px] leading-none">ZDYX-{n}</span>
                    </div>
                  </div>
                ))}
              </div>
            </div>
            <div className="flex-1 min-w-0 flex flex-col">
              <div className="h-[23px] mt-[1px] flex items-start pl-[72px] shrink-0">
                <Search size={14} strokeWidth={3} className="mt-[9px] -ml-[34px] text-[#5a9ad8] shrink-0" />
                <div className="ml-[9px] w-[65px] h-[21px] flex items-center justify-center bg-white border-x border-[#ccc] shrink-0">属性编辑</div>
              </div>
              <div className="flex-1 min-h-0 flex justify-end">
                <div className="w-[14px] mt-[21px] mb-[2px] mr-[8px] bg-[#cdcdcd] border-r border-[#aaa] flex items-end justify-center pb-[6px]">
                  <ChevronDown size={12} strokeWidth={3} className="text-[#555]" />
                </div>
              </div>
            </div>
          </div>
        </div>
      </div>
      {/* status bar */}
      <div className="h-[20px] shrink-0 flex items-stretch gap-[2px] bg-[#f0f0f0] border-t border-[#ddd] pt-[1px] text-[12px]">
        <div className="w-[148px] bg-[#f4f4f4] border border-[#ddd]" />
        <div className="w-[77px] bg-[#f4f4f4] border border-[#ddd] flex items-center pl-[1px] whitespace-nowrap">层高<span className="font-['Liberation_Mono',monospace] text-[10px]">:3.55m</span></div>
        <div className="w-[98px] bg-[#f4f4f4] border border-[#ddd] flex items-center pl-[1px] whitespace-nowrap">底标高<span className="font-['Liberation_Mono',monospace] text-[10px]">:-3.58m</span></div>
        <div className="w-[47px] bg-[#f4f4f4] border border-[#ddd] flex items-center pl-[1px]"><span className="font-['Liberation_Mono',monospace] text-[10px]">0</span></div>
        <div className="flex-1 bg-[#f4f4f4] border border-[#ddd] flex items-center pl-[1px] whitespace-nowrap">
          输入范围：<span className="font-['Liberation_Mono',monospace] text-[10px]">(0</span>，<span className="font-['Liberation_Mono',monospace] text-[10px]">10000]</span>之间的整数
        </div>
      </div>
      <Taskbar />
      <Dialog />
      <Gauge />
      <Sogou />
    </div>
  );
}
